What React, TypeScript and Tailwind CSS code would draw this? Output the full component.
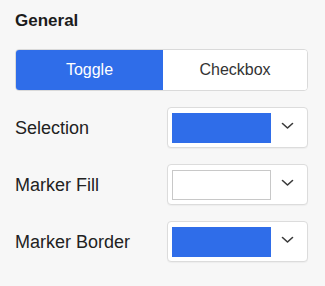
import React from 'react';

type SwatchRowProps = {
  label: string;
  color: string;
  bordered?: boolean;
};

function Chevron() {
  return (
    <svg width="13" height="8" viewBox="0 0 13 8" fill="none" className="mb-[3px]">
      <path d="M1.5 1.5 L6.5 6 L11.5 1.5" stroke="#3a3a3a" strokeWidth="1.6" strokeLinecap="round" strokeLinejoin="round" />
    </svg>
  );
}

function SwatchRow({ label, color, bordered }: SwatchRowProps) {
  return (
    <div className="flex items-center justify-between h-[41px]">
      <span className="text-[18px] leading-[22px] text-[#222]">{label}</span>
      <button className="flex items-center w-[141px] h-[41px] bg-white border border-[#dcdcdc] rounded-[4px] pl-[4px] pr-[13px] shadow-[0_1px_1px_rgba(0,0,0,0.04)]">
        <span
          className={`block w-[99px] h-[30px] ${bordered ? 'border border-[#c8c8c8]' : ''}`}
          style={{ backgroundColor: color }}
        />
        <span className="ml-auto flex items-center">
          <Chevron />
        </span>
      </button>
    </div>
  );
}

export default function App() {
  return (
    <div
      className="w-[325px] h-[286px] bg-[#f7f7f7] pl-[15px] pr-[17px] pt-[11px]"
      style={{ fontFamily: '"Liberation Sans", Arial, sans-serif' }}
    >
      <h2 className="text-[17px] leading-[20px] font-bold text-[#1c1c1c]">General</h2>

      <div className="mt-[18px] flex h-[42px] rounded-[4px] border border-[#dadada] overflow-hidden bg-white">
        <button className="w-[147px] bg-[#2f6de9] text-white text-[16px]">Toggle</button>
        <button className="flex-1 bg-white text-[#333] text-[16px]">Checkbox</button>
      </div>

      <div className="mt-[16px] flex flex-col gap-[16px]">
        <SwatchRow label="Selection" color="#2f6de9" />
        <SwatchRow label="Marker Fill" color="#ffffff" bordered />
        <SwatchRow label="Marker Border" color="#2f6de9" />
      </div>
    </div>
  );
}
